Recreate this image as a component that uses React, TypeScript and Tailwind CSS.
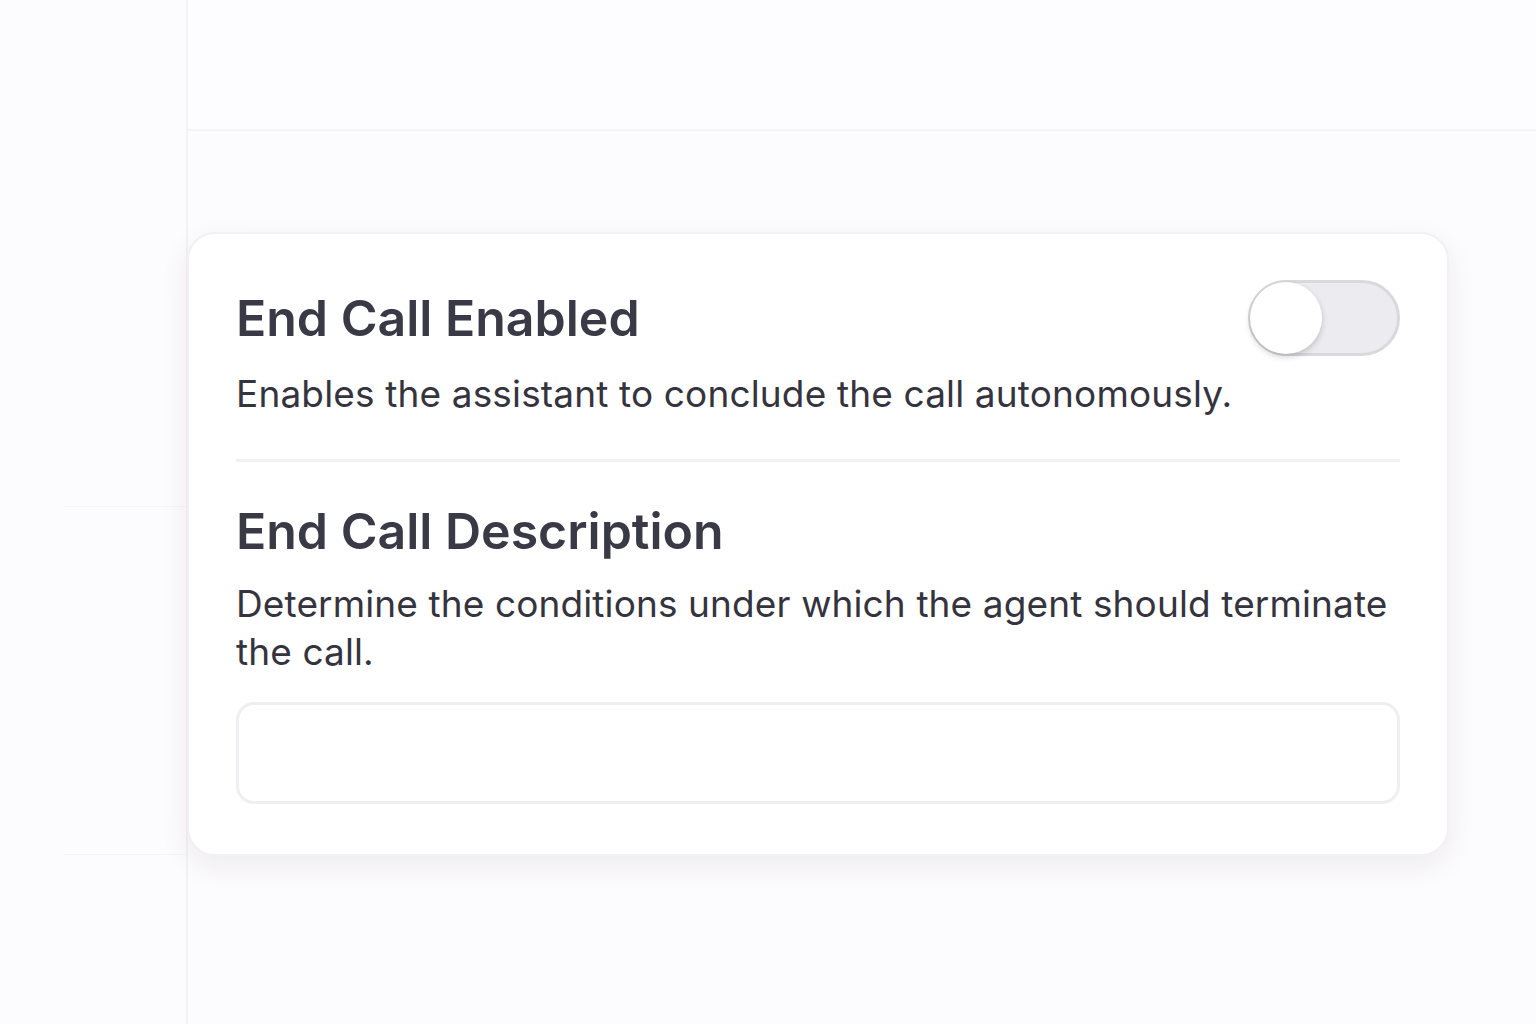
import { useState } from 'react';

function Toggle({ on, onChange }: { on: boolean; onChange: (v: boolean) => void }) {
  return (
    <button
      type="button"
      role="switch"
      aria-checked={on}
      onClick={() => onChange(!on)}
      className={`relative w-[152px] h-[76px] shrink-0 rounded-full border-[3px] transition-colors ${
        on ? 'bg-[#3b3a48] border-[#3b3a48]' : 'bg-[#ececf0] border-[#d9d8dd]'
      }`}
    >
      <span
        className={`absolute top-[-1px] w-[72px] h-[72px] rounded-full bg-white shadow-[0_3px_6px_rgba(0,0,0,0.18)] transition-all ${
          on ? 'left-[75px]' : 'left-[-1px]'
        }`}
      />
    </button>
  );
}

export default function App() {
  const [enabled, setEnabled] = useState(false);
  const [description, setDescription] = useState('');

  return (
    <div className="w-[1536px] h-[1024px] overflow-hidden flex bg-[#fcfbfd] font-['Inter','Noto_Sans',sans-serif]">
      {/* Side rail */}
      <aside className="w-[188px] shrink-0 h-full border-r-2 border-[#f4f2f5] flex flex-col">
        <div className="h-[507px] border-b border-[#f6f4f7] ml-[65px]" />
        <div className="h-[348px] border-b border-[#f6f4f7] ml-[65px]" />
      </aside>

      <main className="flex-1 flex flex-col">
        <header className="h-[131px] shrink-0 border-b-2 border-[#f5f3f6] bg-[#fdfcfe]" />

        <div className="pt-[101px] pr-[87px]">
          <section className="w-[1262px] -ml-[1px] rounded-[28px] bg-white border-2 border-[#f1f0f3] shadow-[0_10px_30px_rgba(40,30,60,0.07)] px-[47px] pt-[46px] pb-[50px]">
            <div className="flex items-center justify-between">
              <h2 className="text-[50px] leading-[56px] font-semibold text-[#3a3946]">
                End Call Enabled
              </h2>
              <Toggle on={enabled} onChange={setEnabled} />
            </div>
            <p className="mt-[14px] text-[37px] leading-[48px] tracking-[0.15px] text-[#35343e]">
              Enables the assistant to conclude the call autonomously.
            </p>

            <div className="mt-[41px] h-[3px] bg-[#f1f0f3]" />

            <h2 className="mt-[41px] text-[50px] leading-[56px] font-semibold text-[#3a3946]">
              End Call Description
            </h2>
            <p className="mt-[21px] text-[37px] leading-[48px] tracking-[0.12px] text-[#35343e]">
              Determine the conditions under which the agent should terminate the call.
            </p>

            <textarea
              value={description}
              onChange={(e) => setDescription(e.target.value)}
              className="mt-[26px] block w-[1164px] h-[102px] resize-none rounded-[18px] border-[3px] border-[#efeef2] bg-white px-6 py-4 text-[32px] text-[#33323c] outline-none"
            />
          </section>
        </div>
      </main>
    </div>
  );
}
